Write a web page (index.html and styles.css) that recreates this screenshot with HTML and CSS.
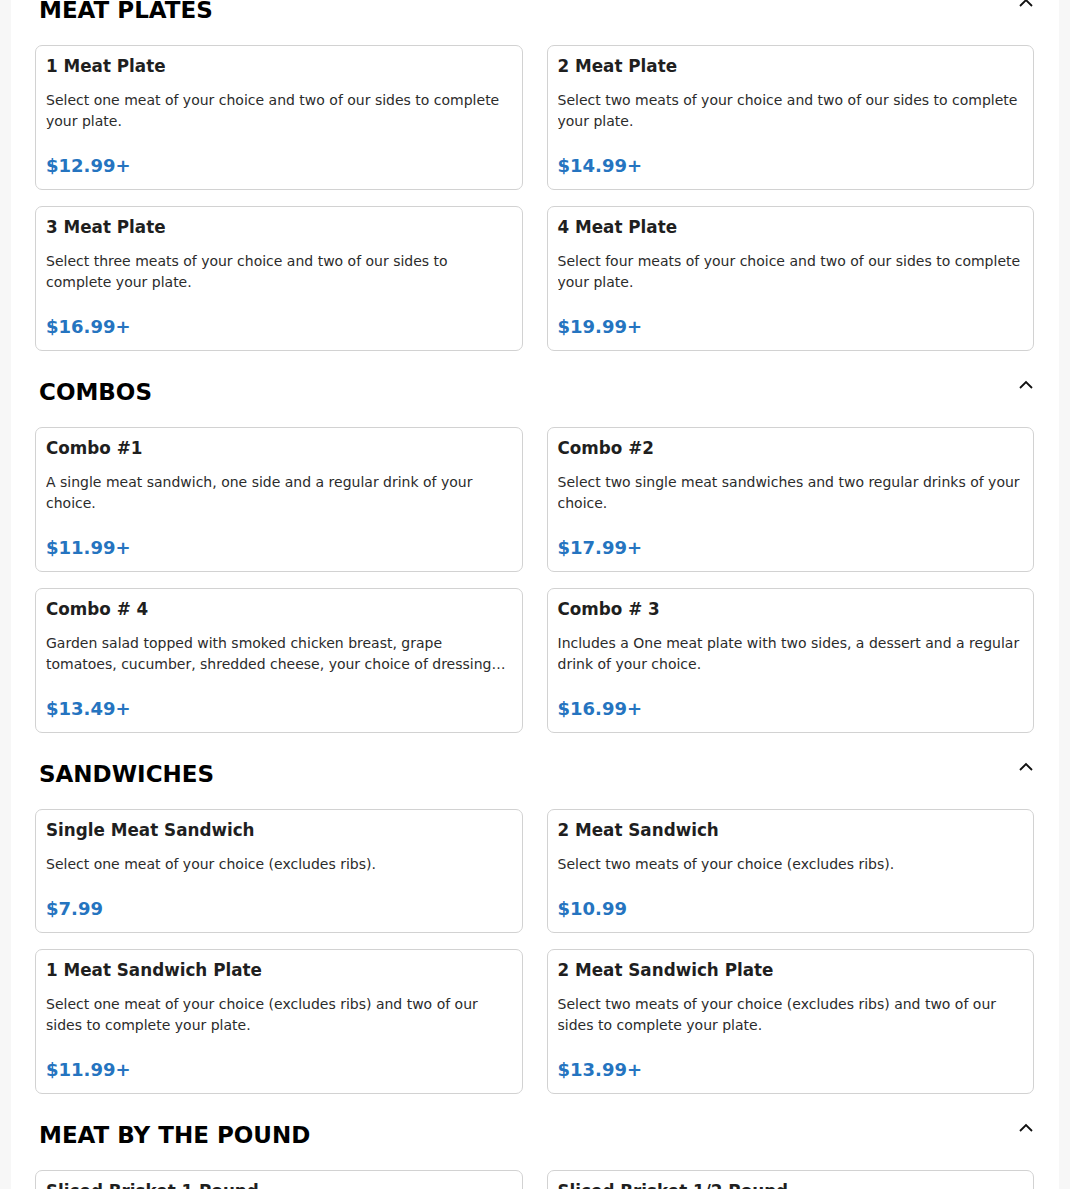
FILE: index.html
```html
<!DOCTYPE html>
<html lang="en">
<head>
  <meta charset="UTF-8" />
  <meta name="viewport" content="width=device-width, initial-scale=1.0" />
  <title>Menu</title>
  <link rel="stylesheet" href="styles.css">
</head>
<body>
  <div class="menu">

    <section class="category">
      <div class="category-head">
        <h2>Meat Plates</h2>
        <button class="toggle" aria-label="Collapse">
          <svg width="16" height="16" viewBox="0 0 16 16"><path d="M2 11 L8 5 L14 11" /></svg>
        </button>
      </div>
      <div class="items">
        <div class="item">
          <h3>1 Meat Plate</h3>
          <p class="desc">Select one meat of your choice and two of our sides to complete your plate.</p>
          <p class="price">$12.99+</p>
        </div>
        <div class="item">
          <h3>2 Meat Plate</h3>
          <p class="desc">Select two meats of your choice and two of our sides to complete your plate.</p>
          <p class="price">$14.99+</p>
        </div>
        <div class="item">
          <h3>3 Meat Plate</h3>
          <p class="desc">Select three meats of your choice and two of our sides to complete your plate.</p>
          <p class="price">$16.99+</p>
        </div>
        <div class="item">
          <h3>4 Meat Plate</h3>
          <p class="desc">Select four meats of your choice and two of our sides to complete your plate.</p>
          <p class="price">$19.99+</p>
        </div>
      </div>
    </section>

    <section class="category">
      <div class="category-head">
        <h2>Combos</h2>
        <button class="toggle" aria-label="Collapse">
          <svg width="16" height="16" viewBox="0 0 16 16"><path d="M2 11 L8 5 L14 11" /></svg>
        </button>
      </div>
      <div class="items">
        <div class="item">
          <h3>Combo #1</h3>
          <p class="desc">A single meat sandwich, one side and a regular drink of your choice.</p>
          <p class="price">$11.99+</p>
        </div>
        <div class="item">
          <h3>Combo #2</h3>
          <p class="desc">Select two single meat sandwiches and two regular drinks of your choice.</p>
          <p class="price">$17.99+</p>
        </div>
        <div class="item">
          <h3>Combo # 4</h3>
          <p class="desc">Garden salad topped with smoked chicken breast, grape tomatoes, cucumber, shredded cheese, your choice of dressing and a regular drink of your choice.</p>
          <p class="price">$13.49+</p>
        </div>
        <div class="item">
          <h3>Combo # 3</h3>
          <p class="desc">Includes a One meat plate with two sides, a dessert and a regular drink of your choice.</p>
          <p class="price">$16.99+</p>
        </div>
      </div>
    </section>

    <section class="category">
      <div class="category-head">
        <h2>Sandwiches</h2>
        <button class="toggle" aria-label="Collapse">
          <svg width="16" height="16" viewBox="0 0 16 16"><path d="M2 11 L8 5 L14 11" /></svg>
        </button>
      </div>
      <div class="items">
        <div class="item">
          <h3>Single Meat Sandwich</h3>
          <p class="desc">Select one meat of your choice (excludes ribs).</p>
          <p class="price">$7.99</p>
        </div>
        <div class="item">
          <h3>2 Meat Sandwich</h3>
          <p class="desc">Select two meats of your choice (excludes ribs).</p>
          <p class="price">$10.99</p>
        </div>
        <div class="item">
          <h3>1 Meat Sandwich Plate</h3>
          <p class="desc">Select one meat of your choice (excludes ribs) and two of our sides to complete your plate.</p>
          <p class="price">$11.99+</p>
        </div>
        <div class="item">
          <h3>2 Meat Sandwich Plate</h3>
          <p class="desc">Select two meats of your choice (excludes ribs) and two of our sides to complete your plate.</p>
          <p class="price">$13.99+</p>
        </div>
      </div>
    </section>

    <section class="category">
      <div class="category-head">
        <h2>Meat by the Pound</h2>
        <button class="toggle" aria-label="Collapse">
          <svg width="16" height="16" viewBox="0 0 16 16"><path d="M2 11 L8 5 L14 11" /></svg>
        </button>
      </div>
      <div class="items">
        <div class="item">
          <h3>Sliced Brisket 1 Pound</h3>
          <p class="desc">One pound of our slow smoked sliced brisket.</p>
          <p class="price">$24.99</p>
        </div>
        <div class="item">
          <h3>Sliced Brisket 1/2 Pound</h3>
          <p class="desc">Half a pound of our slow smoked sliced brisket.</p>
          <p class="price">$12.99</p>
        </div>
      </div>
    </section>

  </div>
</body>
</html>
```

FILE: styles.css
```css
body {
  margin: 0;
  background: #f7f7f7;
  font-family: "DejaVu Sans", Verdana, sans-serif;
  color: #222;
}
.menu {
  background: #fff;
  margin: -29px 11px 0;
  padding: 24px 25px 40px 24px;
}
.category {
  margin-bottom: 26px;
}
.category-head {
  display: flex;
  justify-content: space-between;
  align-items: flex-start;
  padding: 0 0 0 4px;
  margin-bottom: 21px;
}
.category-head h2 {
  margin: 2px 0 0;
  font-size: 23px;
  line-height: 27px;
  text-transform: uppercase;
  color: #000;
}
.toggle {
  border: 0;
  background: none;
  padding: 0;
  width: 16px;
  height: 16px;
  cursor: pointer;
}
.toggle svg {
  display: block;
}
.toggle path {
  fill: none;
  stroke: #111;
  stroke-width: 1.8;
}
.items {
  display: grid;
  grid-template-columns: 1fr 1fr;
  column-gap: 24px;
  row-gap: 16px;
}
.item {
  border: 1px solid #d2d2d2;
  border-radius: 7px;
  padding: 10px;
}
.item h3 {
  margin: 0 0 14px;
  font-size: 16.8px;
  line-height: 20px;
  color: #1f1f1f;
}
.desc {
  margin: 0;
  font-size: 14px;
  line-height: 21px;
  color: #2b2b2b;
  display: -webkit-box;
  -webkit-line-clamp: 2;
  -webkit-box-orient: vertical;
  overflow: hidden;
}
.price {
  margin: 20px 0 0;
  font-size: 18px;
  line-height: 27px;
  font-weight: bold;
  color: #2574c0;
}
```
